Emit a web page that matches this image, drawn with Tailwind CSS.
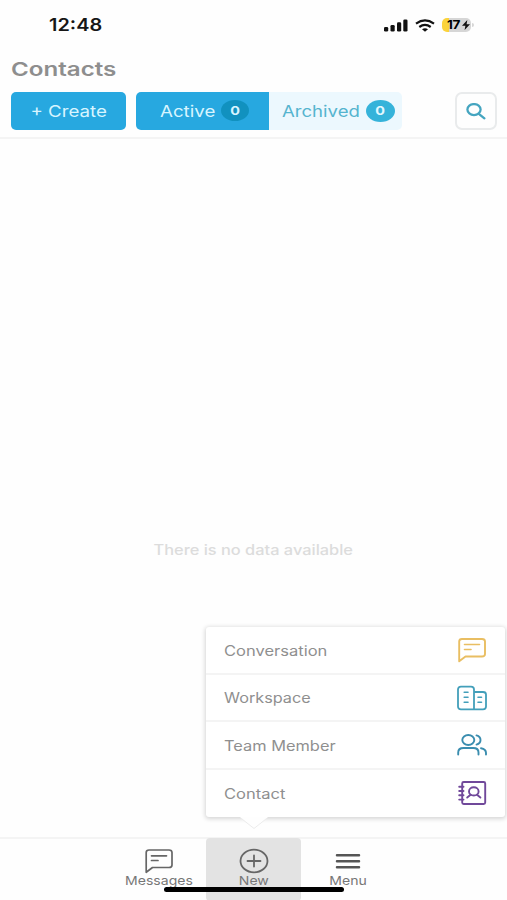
<!DOCTYPE html>
<html lang="en">
<head>
  <meta charset="UTF-8" />
  <meta name="viewport" content="width=device-width, initial-scale=1.0" />
  <title>Contacts</title>
  <script src="https://cdn.jsdelivr.net/npm/@tailwindcss/browser@4"></script>
</head>
<body class="bg-[#fefefe] font-[Inter,sans-serif] overflow-hidden">
  <div class="relative w-[507px] h-[900px] flex flex-col overflow-hidden">

    <!-- Status bar -->
    <div class="h-[50px] pl-[49px] pr-[36px] flex items-center justify-between text-black">
      <span class="text-[17px] leading-none font-semibold text-[#161616] origin-left scale-x-[1.17]">12:48</span>
      <div class="flex items-center">
        <svg class="w-[24px] h-[13px]" viewBox="0 0 24 13" fill="#111">
          <rect x="0" y="8" width="4.2" height="4.5" rx="1.3" />
          <rect x="6.5" y="6" width="4.2" height="6.5" rx="1.3" />
          <rect x="13" y="3.3" width="4.2" height="9.2" rx="1.3" />
          <rect x="19.3" y="0.5" width="4.2" height="12" rx="1.3" />
        </svg>
        <svg class="w-[20px] h-[13px] ml-[7px]" viewBox="0 0 20 13" fill="none" stroke="#111" stroke-width="2.2">
          <path d="M1 4.6Q10 -1.8 19 4.6" />
          <path d="M4.3 8Q10 3.8 15.7 8" />
          <path d="M7 10.2Q10 8.2 13 10.2L10 12.8Z" fill="#111" stroke="none" />
        </svg>
        <div class="relative ml-[7px] w-[29px] h-[14px] rounded-[5px] bg-linear-to-r from-[#fbd33c] from-25% to-[#d6d6d6] to-25% flex items-center pl-[5px]">
          <span class="w-[14px] text-[12px] leading-none font-bold tracking-tight origin-left scale-x-[1.13]">17</span>
          <svg class="w-[8px] h-[10px] ml-px" viewBox="0 0 8 10" fill="#111"><path d="M5.3 0L0 5.7h3.4L2.6 10 8 4.2H4.6Z" /></svg>
          <span class="absolute -right-[3px] top-[5px] w-[2px] h-[4px] rounded-r-full bg-[#d6d6d6]"></span>
        </div>
      </div>
    </div>

    <!-- Header -->
    <header class="h-[89px] px-[11px] border-b-2 border-[#f4f4f4]">
      <h1 class="h-[38px] w-fit flex items-center text-[19px] leading-none font-semibold text-[#8e8e8e] origin-left scale-x-[1.27]">Contacts</h1>
      <div class="mt-[4px] h-[38px] flex text-[16px]">
        <button class="w-[115px] rounded-[5px] bg-[#27a8e0] text-[#d8f5ff] flex items-center justify-center">
          <span class="scale-x-[1.17]">+ Create</span>
        </button>
        <button class="ml-[10px] w-[133px] pl-[24px] rounded-l-[5px] bg-[#27a8e0] text-[#d8f5ff] flex items-center relative">
          <span class="origin-left scale-x-[1.17]">Active</span>
          <span class="absolute left-[85px] top-[8px] w-[28px] h-[21px] rounded-[50%] bg-[#1191bf] flex items-center justify-center text-[12px] font-bold"><span class="scale-x-[1.2]">0</span></span>
        </button>
        <button class="w-[133px] pl-[13px] rounded-r-[5px] bg-[#ecf8fe] text-[#55b4cf] flex items-center relative">
          <span class="origin-left scale-x-[1.16]">Archived</span>
          <span class="absolute left-[97px] top-[8px] w-[29px] h-[22px] rounded-[50%] bg-[#35b3da] text-[#e2f8ff] flex items-center justify-center text-[12px] font-bold"><span class="scale-x-[1.2]">0</span></span>
        </button>
        <button class="ml-auto -mr-px w-[42px] rounded-[7px] border-2 border-[#e9ebec] flex items-center justify-center">
          <svg class="w-[20px] h-[17px]" viewBox="0 0 20 17" fill="none" stroke="#45a5c0" stroke-width="2.3" stroke-linecap="round">
            <ellipse cx="8" cy="6.6" rx="6.6" ry="5.5" /><path d="M12.8 10.8l5.6 4.5" />
          </svg>
        </button>
      </div>
    </header>

    <main class="flex-1 pt-[401px] flex justify-center items-start">
      <p class="text-[14px] leading-[20px] font-medium text-[#dcdcdc] scale-x-[1.17]">There is no data available</p>
    </main>

    <!-- Bottom navigation -->
    <nav class="h-[63px] shrink-0 border-t-2 border-[#f4f4f4] flex justify-center text-[12px] leading-[14px] text-[#777]">
      <a class="w-[94.5px] pt-[9px] flex flex-col items-center">
        <svg class="w-[30px] h-[26px]" viewBox="0 0 30 26" fill="none" stroke="#666" stroke-width="1.7" stroke-linejoin="round" stroke-linecap="round">
          <path d="M2.2 24.3V4.5Q2.2 2 5 2H25Q28 2 28 4.5V17Q28 19.5 25 19.5H8.5Z" /><path d="M7.5 7.8H22.5M7.5 12.5H14" />
        </svg>
        <span class="scale-x-[1.17]">Messages</span>
      </a>
      <a class="w-[94.5px] -mt-px h-[63px] pt-[10px] rounded-[4px] bg-[#e3e3e3] flex flex-col items-center">
        <svg class="w-[30px] h-[26px]" viewBox="0 0 30 26" fill="none" stroke="#666" stroke-width="1.8" stroke-linecap="round">
          <ellipse cx="15" cy="13" rx="13.5" ry="11.3" /><path d="M8.5 13H21.5M15 7.5V18.5" />
        </svg>
        <span class="scale-x-[1.17]">New</span>
      </a>
      <a class="w-[94.5px] pt-[9px] flex flex-col items-center">
        <svg class="w-[30px] h-[26px]" viewBox="0 0 30 26" fill="none" stroke="#555" stroke-width="2.5" stroke-linecap="round">
          <path d="M4 7.2H26M4 13.2H26M4 19.2H26" />
        </svg>
        <span class="scale-x-[1.17]">Menu</span>
      </a>
    </nav>

    <!-- "New" popup menu -->
    <div class="absolute left-[206px] top-[627px] w-[299px] h-[190px] rounded-[3px] bg-white shadow-[0_1px_4px_1px_rgba(0,0,0,0.16)] grid grid-rows-4 divide-y-2 divide-[#f4f4f4] text-[14px] text-[#8f8f8f]">
      <a class="pl-[18px] pr-[18px] pt-px flex items-center justify-between">
        <span class="origin-left scale-x-[1.18]">Conversation</span>
        <svg class="w-[30px] h-[26px]" viewBox="0 0 30 26" fill="none" stroke="#e9be62" stroke-width="1.9" stroke-linejoin="round" stroke-linecap="round">
          <path d="M2.2 24.3V4.5Q2.2 2 5 2H25Q28 2 28 4.5V17Q28 19.5 25 19.5H8.5Z" /><path d="M7.5 7.5H22.5M7.5 12.5H14" stroke-width="1.6" />
        </svg>
      </a>
      <a class="pl-[18px] pr-[18px] pt-px flex items-center justify-between">
        <span class="origin-left scale-x-[1.16]">Workspace</span>
        <svg class="w-[30px] h-[26px]" viewBox="0 0 30 26" fill="none" stroke="#439fba" stroke-width="1.8" stroke-linejoin="round" stroke-linecap="round">
          <path d="M17 24.3H4Q1 24.3 1 21.5V4.5Q1 1.7 4 1.7H14Q17 1.7 17 4.5ZM17 7H26Q29 7 29 9.5V21.5Q29 24.3 26 24.3H17" />
          <path d="M7.2 7.2H11M7.2 12.2H11M7.2 17.2H11M21 12.2H24.5M21 17.2H24.5" stroke-width="1.6" />
        </svg>
      </a>
      <a class="pl-[18px] pr-[18px] pt-px flex items-center justify-between">
        <span class="origin-left scale-x-[1.17]">Team Member</span>
        <svg class="w-[30px] h-[26px]" viewBox="0 0 30 26" fill="none" stroke="#3a8daf" stroke-width="1.9" stroke-linecap="round">
          <ellipse cx="11.3" cy="8" rx="6" ry="5" />
          <path d="M1.2 22.5V20.5Q1.2 16 6.5 16H16.2Q21.5 16 21.5 20.5V22.5" />
          <path d="M19.5 3.4Q23.5 4.5 23.5 8T19.5 12.6M24 16.2Q29 17 29 21V22.5" />
        </svg>
      </a>
      <a class="pl-[18px] pr-[18px] flex items-center justify-between">
        <span class="origin-left scale-x-[1.18]">Contact</span>
        <svg class="w-[30px] h-[26px]" viewBox="0 0 30 26" fill="none" stroke="#70489a" stroke-width="1.9" stroke-linejoin="round" stroke-linecap="round">
          <rect x="5.2" y="2" width="23" height="22" rx="1.5" />
          <path d="M2.2 6.7H6.5M2.2 11H6.5M2.2 15.3H6.5M2.2 19.6H6.5" />
          <ellipse cx="16.8" cy="11.4" rx="4.8" ry="4.1" /><path d="M10.2 17.6L13.6 14.8M23.4 17.6L20 14.8" />
        </svg>
      </a>
    </div>
    <!-- popup arrow -->
    <svg class="absolute left-[240px] top-[817px] w-[28px] h-[14px]" viewBox="0 0 28 14">
      <path d="M0 0L14 11.5L28 0Z" fill="#fefefe" /><path d="M2 2L14 11.5L26 2" fill="none" stroke="#ececec" stroke-width="1" />
    </svg>

    <!-- Home indicator -->
    <div class="absolute left-[164px] top-[887px] w-[180px] h-[5px] rounded-full bg-black"></div>
  </div>
</body>
</html>
